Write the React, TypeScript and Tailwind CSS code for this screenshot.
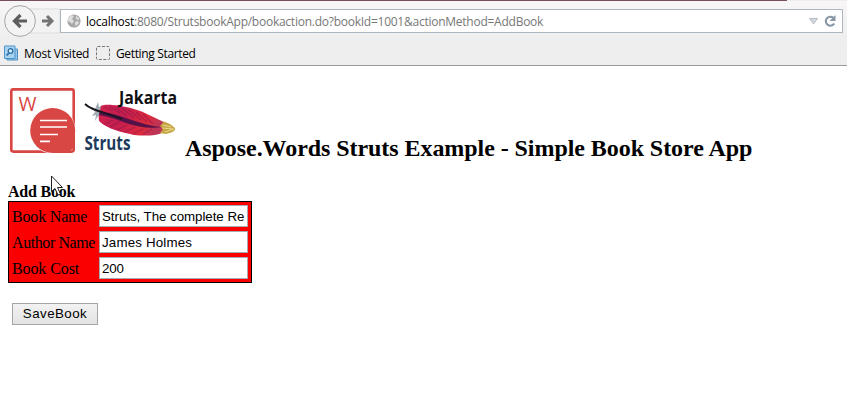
import React from "react";

const fields = [
  { label: "Book Name", value: "Struts, The complete Re", labelStyle: "tracking-[-0.18px]", inputStyle: "tracking-[-0.05px]" },
  { label: "Author Name", value: "James Holmes", labelStyle: "tracking-[-0.42px]", inputStyle: "tracking-[0.17px]" },
  { label: "Book Cost", value: "200", labelStyle: "tracking-[-0.1px]", inputStyle: "tracking-[-0.2px]" },
];

function WordsLogo() {
  return (
    <svg className="block h-[68px] w-[68px]" viewBox="0 0 68 68">
      <rect x="2.300" y="2.400" width="62.400" height="62.200" rx="2" fill="#fff" stroke="#d84744" strokeWidth="2.600" />
      <circle cx="43.500" cy="43.500" r="23" fill="#fff" />
      <circle cx="43.700" cy="43.500" r="22.500" fill="#d84744" />
      <path d="M44 66H56Q66 64 66 54V42Z" fill="#d84744" />
      <text x="9.500" y="23.600" fontSize="20" fill="#d84744" fontFamily="Open Sans, sans-serif" textLength="18" lengthAdjust="spacingAndGlyphs">W</text>
      <path d="M31 33.500H58M31 40H58M31 47.500H49M31 54.300H41" stroke="#fff" strokeWidth="1.700" />
    </svg>
  );
}

function StrutsLogo() {
  return (
    <svg className="block h-[76px] w-[100px] overflow-visible" viewBox="80 81 100 76">
      <defs>
        <linearGradient id="feather" x1="0" y1="0" x2="1" y2="0.25">
          <stop offset="0" stopColor="#d3224e" />
          <stop offset="0.4" stopColor="#c41d4e" />
          <stop offset="0.8" stopColor="#dc2a3e" />
          <stop offset="1" stopColor="#bd3558" />
        </linearGradient>
      </defs>
      <path d="M92 107L95 109 98 102 99 107 103 105 101 119 98 116 95 121 96 115 92 116 95 112Z" fill="#a3abb5" />
      <path d="M101 106C104 104 111 104.500 118 105.500C128 107 140 110 149 115C155 118 160 120 166 123L163 132.500C156 136 145 136 134 135C121 132 108 129 100 122C97 119 100 112 101 106Z" fill="url(#feather)" />
      <path d="M100 111C112 113 126 118 138 122C147 125 155 126.500 162 127C150 129 137 127 123 122C114 118.500 106 116 99 115Z" fill="#541248" />
      <path d="M104 107L113 111M109 106L120 113M115 107L127 116M122 108L134 118M129 110L141 120M136 112L147 122M143 114L153 124M105 124L113 120M110 127L119 122M117 130L127 125M125 132L135 127M133 134L143 129M143 134L152 129" stroke="#7f174c" strokeWidth="1.100" opacity="0.45" />
      <path d="M160 126L164 121.500 170 124 175 128C176 131 171 133 166 134L160 133 163 129Z" fill="#c6a544" />
      <path d="M162 128L174 129 165 132M163 125L171 127" fill="none" stroke="#e6d889" strokeWidth="1.100" />
      <path d="M85 104C89 108 94 110 105 113L122 119" fill="none" stroke="#15151c" strokeWidth="1.800" />
      <g fontFamily="Open Sans, sans-serif" fontWeight="700">
        <text x="119" y="104" fill="#101014" fontSize="17.500" textLength="58" lengthAdjust="spacingAndGlyphs">Jakarta</text>
        <text x="84.500" y="150" fill="#1c3a5c" fontSize="20" textLength="46" lengthAdjust="spacingAndGlyphs">Struts</text>
      </g>
    </svg>
  );
}

function Browser() {
  return (
    <header className="h-[66px] border-b border-[#999] bg-[#eee] font-['Open_Sans',sans-serif] text-[12px] text-black">
      <div className="h-px w-[787px] bg-[#795259]" />
      <div className="flex h-[40px] items-center bg-gradient-to-b from-[#f8f6f7] to-[#eeeeee] pl-1">
        <svg className="h-[34px] w-[56px] shrink-0" viewBox="4 4 56 34">
          <path d="M30 9H60V33H30" fill="#f2f2f2" stroke="#ddd" />
          <circle cx="20" cy="21" r="15.400" fill="#f3f3f3" stroke="#a5a5a5" />
          <path d="M27 21H15M20.500 15L14.500 21L20.500 27" fill="none" stroke="#5e5e5e" strokeWidth="3.200" />
          <path d="M42 21H51M47 16L52 21L47 26" fill="none" stroke="#747474" strokeWidth="3" />
        </svg>
        <div className="flex h-[24px] w-[783px] items-center border border-[#aeb7c0] bg-white px-[6px]">
          <svg className="h-[14px] w-[14px] shrink-0" viewBox="0 0 14 14">
            <circle cx="7" cy="7" r="6.600" fill="#a8a8a8" />
            <path d="M1 4L4 1 7 2 5 5 7 7 5 10 3 8 1 7ZM9 2L12 4 12 6 9 5ZM8 8L11 7 12 9 9 12 8 10Z" fill="#dedede" />
          </svg>
          <span className="ml-[5px] w-[48px] whitespace-nowrap pt-[2px] tracking-[-0.25px]">localhost</span>
          <span className="whitespace-nowrap pt-[2px] text-[#777] tracking-[-0.25px]">:8080/StrutsbookApp/bookaction.do?bookId=1001&amp;actionMethod=AddBook</span>
          <svg className="ml-auto h-[14px] w-[30px]" viewBox="2 0 30 14">
            <path d="M5.500 4.500H13.500L9.500 10Z" fill="#d5d9de" stroke="#b4bcc5" />
            <path d="M30.200 9.500A4.500 4.500 0 1 1 29.300 3.800" fill="none" stroke="#8795a4" strokeWidth="2.100" />
            <path d="M31.500 1V7H25.500Z" fill="#8795a4" />
          </svg>
        </div>
      </div>
      <div className="flex h-[24px] items-center pl-1">
        <svg className="h-4 w-[14px]" viewBox="0 0 14 16">
          <path d="M3 4H13.500V15H3Z" fill="#99c4e8" stroke="#4e91c4" />
          <path d="M.500 1H11V13.500H.500Z" fill="#a9d2ef" stroke="#4c95cb" />
          <circle cx="6.500" cy="6" r="2.300" fill="#d5edfb" stroke="#286da4" strokeWidth="1.300" />
          <path d="M5 8L2.500 10.500" stroke="#286da4" strokeWidth="1.700" />
        </svg>
        <span className="ml-[6px] w-[66px] whitespace-nowrap pt-[2px] tracking-[-0.27px]">Most Visited</span>
        <svg className="ml-[6px] h-[14px] w-[14px]" viewBox="0 0 14 14"><rect x=".5" y=".5" width="13" height="13" rx="1" fill="none" stroke="#777" strokeDasharray="3 1.500" /></svg>
        <span className="ml-[6px] whitespace-nowrap pt-[2px] tracking-[-0.35px]">Getting Started</span>
      </div>
    </header>
  );
}

export default function App() {
  return (
    <div className="h-[401px] w-[847px] overflow-hidden bg-white font-['Liberation_Serif',serif] text-black">
      <Browser />
      <main className="relative px-2">
        <div className="flex h-[116px] items-start">
          <div className="ml-px mt-[21px]"><WordsLogo /></div>
          <div className="ml-[3px] mt-[15px]"><StrutsLogo /></div>
          <h1 className="ml-[5px] mt-[68px] whitespace-nowrap text-[24px] font-bold leading-[28px] tracking-[-0.06px]">Aspose.Words Struts Example - Simple Book Store App</h1>
        </div>
        <h2 className="h-[19px] text-[16px] font-bold leading-[20px] tracking-[-0.2px]">Add Book</h2>
        <form>
          <div className="flex h-[82px] w-[244px] flex-col gap-1 border border-black bg-[#fb0000] p-[3px]">
            {fields.map((field) => (
              <label key={field.label} className="flex h-[22px] items-center">
                <span className={`w-[87px] whitespace-nowrap pt-px text-[16px] leading-[23px] ${field.labelStyle}`}>{field.label}</span>
                <input className={`h-[22px] w-[149px] border border-[#a5abb0] bg-white px-[2px] font-['Liberation_Sans',sans-serif] text-[13.333px] leading-4 outline-none ${field.inputStyle}`} defaultValue={field.value} />
              </label>
            ))}
          </div>
          <button type="button" className="ml-1 mt-5 flex h-[22px] w-[86px] items-center justify-center border border-[#a5a5a5] bg-gradient-to-b from-[#f2f2f2] to-[#e3e3e3] font-['Liberation_Sans',sans-serif] text-[13.333px] tracking-[0.45px]">SaveBook</button>
        </form>
        <svg className="pointer-events-none absolute left-[50px] top-[109px] h-[22px] w-[15px]" viewBox="0 0 15 22">
          <path d="M1.500 1V16.500L5 13.500L8 20L10.500 19L7.500 12.500H12.500Z" fill="#fff" stroke="#222" />
        </svg>
      </main>
    </div>
  );
}
